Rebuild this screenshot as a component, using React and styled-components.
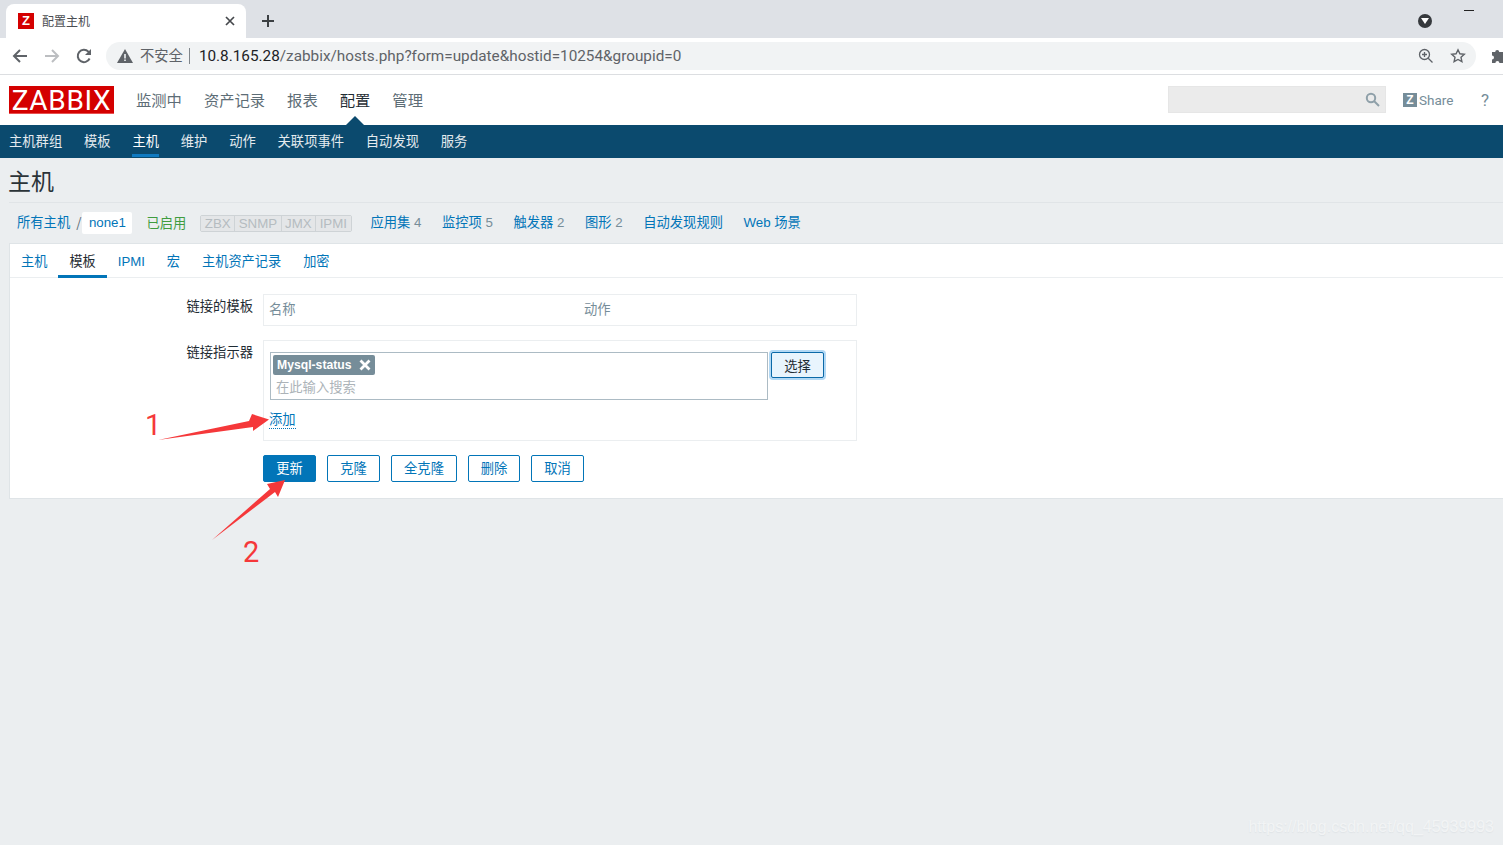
import React from 'react';
import styled, { createGlobalStyle } from 'styled-components';

const CJK = '"Noto Sans CJK SC", sans-serif';
const LATIN = `"Liberation Sans", ${CJK}`;
const CHROME = `Roboto, ${CJK}`;

const GlobalStyle = createGlobalStyle`
  html, body { margin: 0; padding: 0; height: 100%; }
  body { background: #ebeef0; overflow: hidden; font-family: ${LATIN}; }
  * { box-sizing: border-box; }
`;

const Page = styled.div`
  position: relative;
  width: 1503px;
  height: 845px;
  overflow: hidden;
`;

/* browser chrome */
const TabStrip = styled.div`
  height: 38px;
  background: #dee1e6;
  display: flex;
  align-items: flex-end;
  padding-left: 6px;
  position: relative;
`;
const BrowserTab = styled.div`
  width: 240px;
  height: 34px;
  background: #fff;
  border-radius: 8px 8px 0 0;
  display: flex;
  align-items: center;
  padding: 0 11px 1px 12px;
  font-family: ${CHROME};
  font-size: 12px;
  color: #4a4d51;
`;
const Favicon = styled.span`
  width: 16px;
  height: 16px;
  background: #d40000;
  color: #fff;
  font: bold 13px/16px "Liberation Sans", sans-serif;
  text-align: center;
  margin-right: 8px;
`;
const TabTitle = styled.span`
  flex: 1;
`;
const NewTab = styled.span`
  margin-left: 16px;
  height: 34px;
  display: flex;
  align-items: center;
`;
const ProfileDot = styled.span`
  position: absolute;
  left: 1418px;
  top: 14px;
  width: 14px;
  height: 14px;
  border-radius: 50%;
  background: #36393d;
  display: flex;
  align-items: center;
  justify-content: center;
`;
const WindowMin = styled.span`
  position: absolute;
  left: 1464px;
  top: 10px;
  width: 10px;
  height: 1px;
  background: #222;
`;
const Toolbar = styled.div`
  height: 37px;
  background: #fff;
  border-bottom: 1px solid #dcdee1;
  display: flex;
  align-items: center;
  padding: 0 0 1px 11px;
  overflow: hidden;
`;
const NavIcon = styled.span`
  width: 18px;
  height: 18px;
  margin-right: 14px;
  display: flex;
`;
const Omnibox = styled.div`
  width: 1370px;
  height: 28px;
  border-radius: 14px;
  background: #f1f3f4;
  display: flex;
  align-items: center;
  padding-left: 11px;
  margin-left: -1px;
  flex: none;
  font-family: ${CHROME};
`;
const Insecure = styled.span`
  font-size: 14.3px;
  color: #5f6368;
  margin-left: 7px;
  padding-right: 6px;
  border-right: 1px solid #80868b;
  line-height: 16px;
`;
const Url = styled.span`
  font-size: 15.3px;
  color: #5f6368;
  margin-left: 9px;
  flex: 1;
  b { font-weight: 400; color: #202124; }
`;
const OmniIcon = styled.span`
  width: 16px;
  height: 16px;
  margin-right: 16px;
  display: flex;
  &:last-child { margin-right: 10px; }
`;
const Puzzle = styled.span`
  margin-left: 15px;
  display: flex;
  flex: none;
`;

/* zabbix header */
const Header = styled.header`
  height: 50px;
  background: #fff;
  display: flex;
  align-items: center;
  padding: 0 0 1px 9px;
`;
const Logo = styled.div`
  width: 105px;
  height: 28px;
  background: #d40000;
  border-bottom: 1px solid #e85050;
  color: #fff;
  font: 400 28px/29px Roboto, sans-serif;
  text-align: center;
  letter-spacing: 0.7px;
  margin-right: 22px;
  white-space: nowrap;
`;
const TopMenu = styled.nav`
  display: flex;
  gap: 22px;
  flex: 1;
`;
const TopItem = styled.a`
  font-family: ${CJK};
  font-size: 15.3px;
  line-height: 20px;
  padding-bottom: 2px;
  color: ${p => (p.$active ? '#1f2c33' : '#5d6d76')};
  position: relative;
  ${p => p.$active && `
    &::after {
      content: '';
      position: absolute;
      left: 6px;
      bottom: -14px;
      border: 9px solid transparent;
      border-top: 0;
      border-bottom-color: #0b4a6e;
    }
  `}
`;
const Search = styled.div`
  width: 218px;
  height: 27px;
  background: #ebebeb;
  border: 1px solid #e6e6e6;
  display: flex;
  align-items: center;
  justify-content: flex-end;
  padding-right: 5px;
  margin-right: 17px;
`;
const Share = styled.div`
  display: flex;
  align-items: center;
  gap: 2px;
  font: 13.5px Roboto, sans-serif;
  color: #768d99;
  width: 78px;
`;
const ShareBadge = styled.span`
  width: 14px;
  height: 14px;
  background: #768d99;
  color: #fff;
  font: bold 12px/14px "Liberation Sans", sans-serif;
  text-align: center;
`;
const Help = styled.span`
  font: 17px Roboto, sans-serif;
  color: #768d99;
  width: 22px;
`;
const SubNav = styled.nav`
  height: 33px;
  background: #0b4a6e;
  display: flex;
  gap: 21.8px;
  padding-left: 9px;
`;
const SubItem = styled.a`
  font-family: ${CJK};
  font-size: 13.3px;
  line-height: 32px;
  height: 32px;
  color: ${p => (p.$active ? '#fff' : '#e4ebef')};
  ${p => p.$active && 'border-bottom: 3px solid #0f7ac1;'}
`;

/* content */
const Content = styled.main`
  padding: 0 0 0 9px;
`;
const Title = styled.h1`
  margin: 0;
  height: 45px;
  border-bottom: 1px solid #e0e4e7;
  font-family: ${CJK};
  font-weight: 400;
  font-size: 23px;
  line-height: 45px;
  text-indent: -1px;
  color: #2b3338;
`;
const Breadcrumbs = styled.div`
  height: 40px;
  display: flex;
  align-items: center;
  padding-left: 8px;
  font-size: 13.3px;
  font-family: ${CJK};
  line-height: 18px;
`;
const Link = styled.a`
  color: #0275b8;
  font-family: ${LATIN};
  margin-left: ${p => p.$gap || 0}px;
  span { color: #768d99; }
`;
const Slash = styled.span`
  color: #5d6d76;
  margin: 0 1px 0 6px;
`;
const Current = styled.span`
  background: #fff;
  border-radius: 2px;
  height: 22px;
  line-height: 22px;
  padding: 0 6.5px;
  font-family: ${LATIN};
  color: #0275b8;
`;
const Enabled = styled.span`
  color: #3f9c3f;
  margin: 0 14px;
`;
const Avail = styled.span`
  display: flex;
  border: 1px solid #ced3d6;
  border-radius: 2px;
  height: 17px;
  margin-right: 19px;
`;
const AvailItem = styled.span`
  background: #e4e6e8;
  color: #b5bcc0;
  font: 13.3px/15px "Liberation Sans", sans-serif;
  padding: 0 3.5px;
  & + & { border-left: 1px solid #ced3d6; }
`;
const Card = styled.section`
  width: 1494px;
  height: 256px;
  background: #fff;
  border: 1px solid #dfe4e7;
  border-right: 0;
`;
const Tabs = styled.div`
  height: 34px;
  border-bottom: 1px solid #ebeef0;
  display: flex;
`;
const TabItem = styled.a`
  height: 34px;
  padding: 0 11px;
  font-size: 13.2px;
  line-height: 35px;
  font-family: ${LATIN};
  color: ${p => (p.$active ? '#1f2c33' : '#0275b8')};
  ${p => p.$active && 'border-bottom: 3px solid #0275b8;'}
`;
const Form = styled.div`
  padding-top: 16px;
  display: grid;
  grid-template-columns: 243px 594px;
  column-gap: 10px;
  align-items: start;
`;
const Label = styled.label`
  text-align: right;
  font-family: ${CJK};
  font-size: 13.3px;
  line-height: 16px;
  color: #1f2c33;
  padding-top: 4px;
`;
const Box = styled.div`
  border: 1px solid #ebeef0;
`;
const LinkedHead = styled(Box)`
  height: 32px;
  margin-bottom: 14px;
  display: grid;
  grid-template-columns: 315px 1fr;
  padding: 0 5px;
  font-family: ${CJK};
  font-size: 13.3px;
  line-height: 27px;
  color: #768d99;
`;
const IndicatorBox = styled(Box)`
  height: 101px;
  padding: 11px 6px 0;
`;
const SelectRow = styled.div`
  display: flex;
  align-items: flex-start;
  gap: 3px;
`;
const MultiSelect = styled.div`
  width: 498px;
  height: 48px;
  border: 1px solid #acbbc4;
  padding: 2px;
`;
const Chip = styled.span`
  display: inline-flex;
  align-items: center;
  height: 20px;
  padding: 0 4px;
  background: #768d99;
  border-radius: 2px;
  color: #fff;
  font: bold 12.2px "Liberation Sans", sans-serif;
  gap: 7px;
`;
const SearchHint = styled.div`
  font-family: ${CJK};
  font-size: 13.3px;
  line-height: 19px;
  color: #acb3b8;
  padding: 2px 0 0 3px;
`;
const FocusButton = styled.button`
  width: 53px;
  height: 26px;
  padding: 0;
  background: #e8f4fd;
  border: 1px solid #0b69a8;
  border-radius: 2px;
  box-shadow: 0 0 0 2px #b3d9f5;
  font-family: ${CJK};
  font-size: 13.3px;
  color: #1f2c33;
`;
const AddLink = styled.a`
  display: inline-block;
  margin: 11px 0 0 -1px;
  padding-bottom: 2px;
  font-family: ${CJK};
  font-size: 13.3px;
  line-height: 15px;
  color: #0275b8;
  border-bottom: 1px dotted #0275b8;
`;
const Actions = styled.div`
  grid-column: 2;
  display: flex;
  gap: 11px;
  margin-top: 14px;
`;
const Btn = styled.button`
  height: 27px;
  width: ${p => p.$w}px;
  padding: 0 0 2px;
  border: 1px solid #0275b8;
  border-radius: 2px;
  background: ${p => (p.$primary ? '#0275b8' : '#fff')};
  color: ${p => (p.$primary ? '#fff' : '#0275b8')};
  font-family: ${CJK};
  font-size: 13.3px;
`;

/* things pasted over the screenshot */
const Overlay = styled.svg`
  position: absolute;
  left: 0;
  top: 0;
  pointer-events: none;
`;
const Digit = styled.span`
  position: absolute;
  left: ${p => p.$x}px;
  top: ${p => p.$y}px;
  color: #f5383a;
  font: 29px/30px Roboto, sans-serif;
`;
const Watermark = styled.span`
  position: absolute;
  right: 9px;
  bottom: 9px;
  font: 16px "Liberation Sans", sans-serif;
  color: #f2f4f5;
  text-shadow: 0 1px 1px #dfe3e6;
`;

const Arrow = ({ d, color = '#5f6368', width = 2 }) => (
  <svg width="18" height="18" viewBox="0 0 18 18" fill="none" stroke={color} strokeWidth={width}>
    <path d={d} />
  </svg>
);

const topMenu = ['监测中', '资产记录', '报表', '配置', '管理'];
const subMenu = ['主机群组', '模板', '主机', '维护', '动作', '关联项事件', '自动发现', '服务'];
const formTabs = ['主机', '模板', 'IPMI', '宏', '主机资产记录', '加密'];
const counts = [
  ['应用集', '4'],
  ['监控项', '5'],
  ['触发器', '2'],
  ['图形', '2'],
  ['自动发现规则', ''],
  ['Web 场景', ''],
];
const buttons = [
  ['更新', 53, true],
  ['克隆', 53],
  ['全克隆', 66],
  ['删除', 52],
  ['取消', 53],
];

export default function App() {
  return (
    <Page>
      <GlobalStyle />
      <TabStrip>
        <BrowserTab>
          <Favicon>Z</Favicon>
          <TabTitle>配置主机</TabTitle>
          <svg width="10" height="10" viewBox="0 0 10 10" stroke="#45484c" strokeWidth="1.7">
            <path d="M1 1l8 8M9 1l-8 8" />
          </svg>
        </BrowserTab>
        <NewTab>
          <svg width="12" height="12" viewBox="0 0 12 12" stroke="#3c4043" strokeWidth="2">
            <path d="M6 0v12M0 6h12" />
          </svg>
        </NewTab>
        <ProfileDot>
          <svg width="8" height="6" viewBox="0 0 8 6" fill="#fff">
            <path d="M0 0h8L4 6z" />
          </svg>
        </ProfileDot>
        <WindowMin />
      </TabStrip>
      <Toolbar>
        <NavIcon>
          <Arrow d="M16 9H3M9 3L3 9l6 6" />
        </NavIcon>
        <NavIcon>
          <Arrow d="M2 9h13M9 3l6 6-6 6" color="#bcbec1" />
        </NavIcon>
        <NavIcon>
          <svg width="18" height="18" viewBox="0 0 18 18" fill="none">
            <path d="M14.6 11.5A6.2 6.2 0 1 1 13.4 4.6L15 6.2" stroke="#5f6368" strokeWidth="2" />
            <path d="M16 2v6h-6z" fill="#5f6368" />
          </svg>
        </NavIcon>
        <Omnibox>
          <svg width="16" height="14" viewBox="0 0 16 14">
            <path d="M8 0l8 14H0z" fill="#5f6368" />
            <path d="M7.2 5h1.6v4.5H7.2zM7.2 10.5h1.6V12H7.2z" fill="#f1f3f4" />
          </svg>
          <Insecure>不安全</Insecure>
          <Url>
            <b>10.8.165.28</b>/zabbix/hosts.php?form=update&amp;hostid=10254&amp;groupid=0
          </Url>
          <OmniIcon>
            <svg width="16" height="16" viewBox="0 0 16 16" fill="none" stroke="#5f6368" strokeWidth="1.3">
              <circle cx="6.5" cy="6.5" r="5" />
              <path d="M10.2 10.2L14.5 14.5M4 6.5h5M6.5 4v5" />
            </svg>
          </OmniIcon>
          <OmniIcon>
            <svg width="16" height="16" viewBox="0 0 16 16" fill="none" stroke="#5f6368" strokeWidth="1.4">
              <path d="M8 1.8l1.9 4 4.4.5-3.3 3 .9 4.4L8 11.5l-3.9 2.2.9-4.4-3.3-3 4.4-.5z" />
            </svg>
          </OmniIcon>
        </Omnibox>
        <Puzzle>
          <svg width="16" height="16" viewBox="0 0 16 16" fill="#5f6368">
            <path d="M1 4h3.2a2 2 0 1 1 4 0H12v3.2a2 2 0 1 1 0 4V15H8.4a2 2 0 1 0-4 0H1v-3.6a2 2 0 1 0 0-4z" />
          </svg>
        </Puzzle>
      </Toolbar>

      <Header>
        <Logo>ZABBIX</Logo>
        <TopMenu>
          {topMenu.map(t => (
            <TopItem key={t} $active={t === '配置'}>
              {t}
            </TopItem>
          ))}
        </TopMenu>
        <Search>
          <svg width="15" height="15" viewBox="0 0 15 15" fill="none" stroke="#8fa0a9" strokeWidth="2">
            <circle cx="6" cy="6" r="4.2" />
            <path d="M9 9l5 5" />
          </svg>
        </Search>
        <Share>
          <ShareBadge>Z</ShareBadge>
          Share
        </Share>
        <Help>?</Help>
      </Header>
      <SubNav>
        {subMenu.map(t => (
          <SubItem key={t} $active={t === '主机'}>
            {t}
          </SubItem>
        ))}
      </SubNav>

      <Content>
        <Title>主机</Title>
        <Breadcrumbs>
          <Link>所有主机</Link>
          <Slash>/</Slash>
          <Current>none1</Current>
          <Enabled>已启用</Enabled>
          <Avail>
            {['ZBX', 'SNMP', 'JMX', 'IPMI'].map(a => (
              <AvailItem key={a}>{a}</AvailItem>
            ))}
          </Avail>
          {counts.map(([name, n], i) => (
            <Link key={name} $gap={i ? 20.5 : 0}>
              {name}
              {n && <span> {n}</span>}
            </Link>
          ))}
        </Breadcrumbs>
        <Card>
          <Tabs>
            {formTabs.map(t => (
              <TabItem key={t} $active={t === '模板'}>
                {t}
              </TabItem>
            ))}
          </Tabs>
          <Form>
            <Label>链接的模板</Label>
            <LinkedHead>
              <span>名称</span>
              <span>动作</span>
            </LinkedHead>
            <Label>链接指示器</Label>
            <IndicatorBox>
              <SelectRow>
                <MultiSelect>
                  <Chip>
                    Mysql-status
                    <svg width="12" height="12" viewBox="0 0 12 12" stroke="#fff" strokeWidth="2.8">
                      <path d="M1.5 1.5l9 9M10.5 1.5l-9 9" />
                    </svg>
                  </Chip>
                  <SearchHint>在此输入搜索</SearchHint>
                </MultiSelect>
                <FocusButton>选择</FocusButton>
              </SelectRow>
              <AddLink>添加</AddLink>
            </IndicatorBox>
            <Actions>
              {buttons.map(([t, w, primary]) => (
                <Btn key={t} $w={w} $primary={primary}>
                  {t}
                </Btn>
              ))}
            </Actions>
          </Form>
        </Card>
      </Content>

      <Overlay width="1503" height="845" viewBox="0 0 1503 845">
        <path d="M158 440L249 421 252 414 269 419.5 253 431 253 427z" fill="#f5383a" />
        <path d="M212 540L270 489 267 484 285 480 278 497 275 492z" fill="#f5383a" />
      </Overlay>
      <Digit $x={145} $y={410}>1</Digit>
      <Digit $x={243} $y={537}>2</Digit>
      <Watermark>https://blog.csdn.net/qq_45939993</Watermark>
    </Page>
  );
}
